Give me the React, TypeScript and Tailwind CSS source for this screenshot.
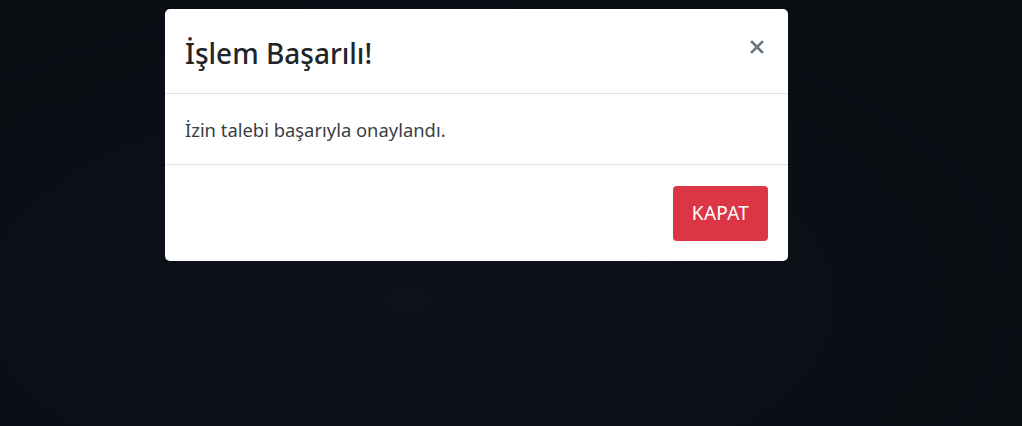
import type { FC } from "react";

const CloseIcon: FC = () => (
  <svg width="14" height="14" viewBox="0 0 14 14" aria-hidden="true">
    <path d="M2 2 L12 12 M12 2 L2 12" stroke="#6c757d" strokeWidth="2.6" strokeLinecap="square" />
  </svg>
);

const App: FC = () => {
  return (
    <div
      className="w-[1022px] h-[426px] overflow-hidden bg-[radial-gradient(ellipse_at_40%_70%,#0d111a_0%,#0b0e14_60%,#0a0d12_100%)] pt-[9px] pl-[165px]"
      style={{ fontFamily: '"Noto Sans", "Open Sans", sans-serif' }}
    >
      <div className="w-[623px] bg-white rounded-[5px] flex flex-col">
        <div className="h-[85px] flex items-center justify-between px-5 border-b border-[#dee2e6]">
          <h4 className="text-[28px] leading-none text-[#212529] font-medium pt-[3px]">İşlem Başarılı!</h4>
          <button className="mr-[4px] mb-[8px] flex items-center justify-center">
            <CloseIcon />
          </button>
        </div>
        <div className="h-[71px] flex items-center px-5 border-b border-[#dee2e6]">
          <p className="text-[18.4px] text-[#3a3f45] pt-[1px]">İzin talebi başarıyla onaylandı.</p>
        </div>
        <div className="h-[96px] flex items-start justify-end px-5 pt-[21px]">
          <button className="w-[95px] h-[55px] rounded-[4px] bg-[#dc3545] text-white text-[19px] font-normal tracking-[0.3px]">
            KAPAT
          </button>
        </div>
      </div>
    </div>
  );
};

export default App;
